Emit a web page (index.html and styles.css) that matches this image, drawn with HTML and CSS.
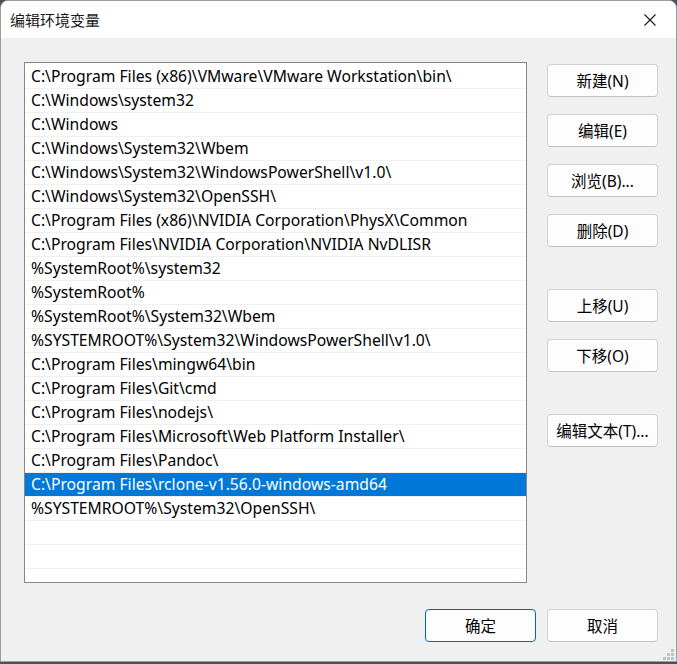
FILE: index.html
```html
<!DOCTYPE html>
<html lang="zh-CN">
<head>
    <meta charset="UTF-8">
    <title>编辑环境变量</title>
    <link rel="stylesheet" href="styles.css">
</head>
<body>
    <div class="window">
        <div class="titlebar">
            <span class="title">编辑环境变量</span>
            <button class="close" aria-label="关闭">
                <svg width="12" height="12" viewBox="0 0 12 12">
                    <path d="M0.5 0.5 L11.5 11.5 M11.5 0.5 L0.5 11.5" stroke="#1a1a1a" stroke-width="1.1" fill="none"/>
                </svg>
            </button>
        </div>

        <div class="content">
            <div class="main">
                <div class="list">
                    <div class="row">C:\Program Files (x86)\VMware\VMware Workstation\bin\</div>
                    <div class="row">C:\Windows\system32</div>
                    <div class="row">C:\Windows</div>
                    <div class="row">C:\Windows\System32\Wbem</div>
                    <div class="row">C:\Windows\System32\WindowsPowerShell\v1.0\</div>
                    <div class="row">C:\Windows\System32\OpenSSH\</div>
                    <div class="row">C:\Program Files (x86)\NVIDIA Corporation\PhysX\Common</div>
                    <div class="row">C:\Program Files\NVIDIA Corporation\NVIDIA NvDLISR</div>
                    <div class="row">%SystemRoot%\system32</div>
                    <div class="row">%SystemRoot%</div>
                    <div class="row">%SystemRoot%\System32\Wbem</div>
                    <div class="row">%SYSTEMROOT%\System32\WindowsPowerShell\v1.0\</div>
                    <div class="row">C:\Program Files\mingw64\bin</div>
                    <div class="row">C:\Program Files\Git\cmd</div>
                    <div class="row">C:\Program Files\nodejs\</div>
                    <div class="row">C:\Program Files\Microsoft\Web Platform Installer\</div>
                    <div class="row">C:\Program Files\Pandoc\</div>
                    <div class="row selected">C:\Program Files\rclone-v1.56.0-windows-amd64</div>
                    <div class="row">%SYSTEMROOT%\System32\OpenSSH\</div>
                    <div class="row"></div>
                    <div class="row"></div>
                    <div class="row"></div>
                </div>

                <div class="side">
                    <button class="btn">新建(N)</button>
                    <button class="btn">编辑(E)</button>
                    <button class="btn">浏览(B)...</button>
                    <button class="btn">删除(D)</button>
                    <button class="btn group">上移(U)</button>
                    <button class="btn">下移(O)</button>
                    <button class="btn group">编辑文本(T)...</button>
                </div>
            </div>

            <div class="footer">
                <button class="btn default">确定</button>
                <button class="btn">取消</button>
            </div>
        </div>

        <svg class="grip" width="12" height="12" viewBox="0 0 12 12">
            <rect x="8" y="0" width="3" height="3" fill="#c4c4c4"/>
            <rect x="4" y="4" width="3" height="3" fill="#c4c4c4"/>
            <rect x="8" y="4" width="3" height="3" fill="#c4c4c4"/>
            <rect x="0" y="8" width="3" height="3" fill="#c4c4c4"/>
            <rect x="4" y="8" width="3" height="3" fill="#c4c4c4"/>
            <rect x="8" y="8" width="3" height="3" fill="#c4c4c4"/>
        </svg>
    </div>
</body>
</html>
```

FILE: styles.css
```css
body {
    margin: 0;
    background-color: #4a5060;
    font-family: "Noto Sans", "Noto Sans CJK SC", sans-serif;
    font-size: 15px;
    color: #000;
}

.window {
    position: relative;
    width: 677px;
    height: 662px;
    box-sizing: border-box;
    border: 1px solid #9c9c9c;
    border-radius: 8px 8px 0 0;
    background-color: #f0f0f0;
    overflow: hidden;
}

.titlebar {
    height: 37px;
    background-color: #fff;
    display: flex;
    align-items: center;
    justify-content: space-between;
    padding-left: 9px;
}

.title {
    font-family: "Noto Sans CJK SC", sans-serif;
    font-size: 15px;
    color: #1a1a1a;
}

.close {
    width: 46px;
    height: 37px;
    border: none;
    background: none;
    padding: 0;
    display: flex;
    align-items: center;
    justify-content: center;
    margin-right: 3px;
}

.content {
    padding: 24px 18px 0 23px;
}

.main {
    display: flex;
    gap: 20px;
}

.list {
    width: 504px;
    height: 521px;
    box-sizing: border-box;
    border: 1px solid #828790;
    background-color: #fff;
    padding-top: 2px;
    overflow: hidden;
}

.row {
    height: 24px;
    box-sizing: border-box;
    border-bottom: 1px solid #f0f0f0;
    padding-left: 6px;
    line-height: 23px;
    font-size: 15.7px;
    white-space: nowrap;
    background-clip: padding-box;
}

.row.selected {
    background-color: #0078d7;
    color: #fff;
}

.side {
    display: flex;
    flex-direction: column;
    gap: 17px;
    padding-top: 2px;
}

.btn {
    width: 111px;
    height: 33px;
    box-sizing: border-box;
    border: 1px solid #d0d0d0;
    border-bottom-color: #c2c2c2;
    border-radius: 4px;
    background-color: #fdfdfd;
    font-family: "Noto Sans", "Noto Sans CJK SC", sans-serif;
    font-size: 15.5px;
    color: #000;
    padding: 0;
}

.btn.group {
    margin-top: 25px;
}

.btn.default {
    border: 1px solid #0067c0;
}

.footer {
    display: flex;
    justify-content: flex-end;
    gap: 11px;
    margin-top: 26px;
}

.grip {
    position: absolute;
    right: 1px;
    bottom: 0;
}
```
